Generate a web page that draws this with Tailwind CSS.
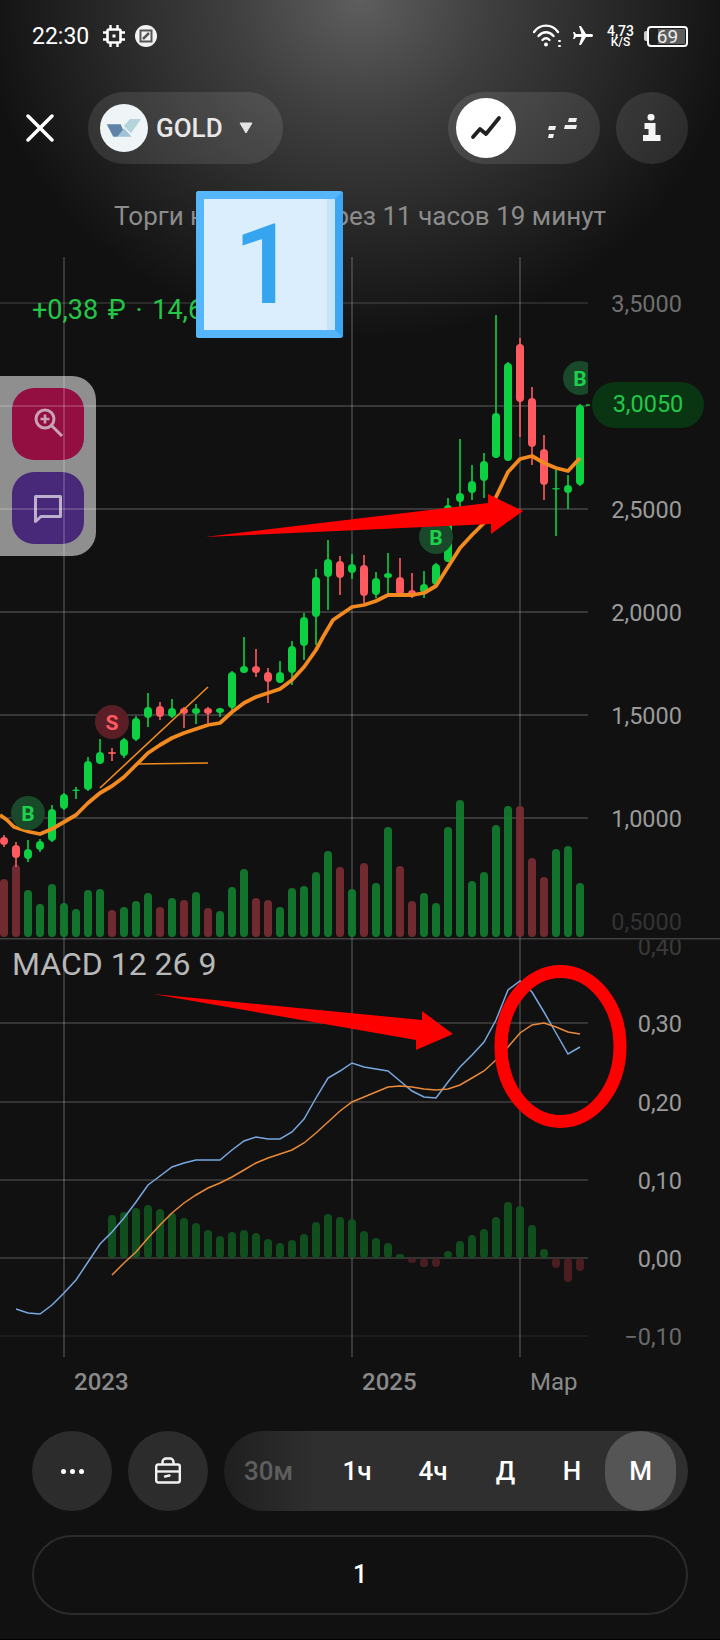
<!DOCTYPE html>
<html lang="ru">
<head>
  <meta charset="UTF-8">
  <meta name="viewport" content="width=device-width, initial-scale=1.0">
  <title>GOLD - график</title>
  <script src="https://cdn.jsdelivr.net/npm/@tailwindcss/browser@4"></script>
</head>
<body class="bg-black">
  <div class="relative w-[720px] h-[1639px] overflow-hidden flex flex-col bg-[#111111] bg-[radial-gradient(ellipse_380px_340px_at_360px_0px,#5e5e5e_0%,#3e3e3e_35%,#111111_100%)] font-['Roboto',sans-serif]">

    <!-- Status bar -->
    <div class="h-[72px] shrink-0 pl-[32px] pr-[32px] flex items-center justify-between text-white">
      <div class="flex items-center">
        <span class="text-[23px] leading-none">22:30</span>
        <svg class="ml-[14px]" width="22" height="22" viewBox="0 0 22 22" fill="none" stroke="#fff">
          <rect x="4.5" y="4.5" width="13" height="13" rx="1.5" stroke-width="2.6"/>
          <rect x="9.5" y="9.5" width="3" height="3" fill="#fff" stroke="none"/>
          <path d="M7.5 0v4M14.500 0v4M7.5 18v4M14.500 18v4M0 7.500h4M0 14.500h4M18 7.500h4M18 14.500h4" stroke-width="2.400"/>
        </svg>
        <svg class="ml-[10px]" width="22" height="22" viewBox="0 0 22 22">
          <circle cx="11" cy="11" r="11" fill="#f2f2f2"/>
          <rect x="5.500" y="5.500" width="11" height="11" fill="none" stroke="#555" stroke-width="2"/>
          <path d="M8 14l6-6" stroke="#555" stroke-width="2.500"/>
        </svg>
      </div>
      <div class="flex items-center">
        <svg width="28" height="24" viewBox="0 0 28 24" fill="none" stroke="#fff" stroke-width="2.400" stroke-linecap="round">
          <path d="M1 8C7-.5 19-.5 25 8"/>
          <path d="M5.500 12c4.500-5 10.500-5 15 0"/>
          <path d="M9.500 16c2.500-2.500 4.500-2.500 7 0"/>
          <circle cx="13" cy="20.500" r="2" fill="#fff" stroke="none"/>
          <path d="M26 17h1M26 22h1" stroke-width="2"/>
        </svg>
        <svg class="ml-[10px]" width="24" height="24" viewBox="0 0 24 24" fill="#fff">
          <path transform="rotate(90 12 12)" d="M21 16v-2l-8-5V3.500c0-.83-.67-1.500-1.500-1.500S10 2.670 10 3.500V9l-8 5v2l8-2.500V19l-2 1.500V22l3.500-1 3.500 1v-1.500L13 19v-5.500l8 2.500z"/>
        </svg>
        <div class="ml-[11px] w-[29px] flex flex-col items-center text-white">
          <span class="text-[14px] leading-[12px] font-medium">4,73</span>
          <span class="text-[12px] leading-[10px] font-medium">K/S</span>
        </div>
        <div class="ml-[9px] w-[3px] h-[10px] bg-[#cccccc] rounded-l-[2px]"></div>
        <div class="relative w-[41px] h-[21px] border-2 border-white rounded-[4px] flex justify-end items-stretch p-[1px]">
          <div class="w-[76%] bg-[#5c5c5c]"></div>
          <span class="absolute inset-0 flex items-center justify-center text-[19px] leading-none text-[#eeeeee]">69</span>
        </div>
      </div>
    </div>

    <!-- Header -->
    <div class="mt-[20px] h-[72px] shrink-0 flex items-center justify-between pl-[26px] pr-[32px]">
      <div class="flex items-center">
        <svg width="28" height="28" viewBox="0 0 28 28" stroke="#fff" stroke-width="3.500" stroke-linecap="round">
          <path d="M2 2l24 24M26 2L2 26"/>
        </svg>
        <div class="ml-[34px] w-[195px] h-[72px] rounded-full bg-white/10 flex items-center pl-[12px]">
          <svg width="48" height="48" viewBox="0 0 48 48">
            <circle cx="24" cy="24" r="24" fill="#eff5f7"/>
            <polygon points="6.700,20.300 20.700,20.300 24,27.700 17.300,32.700 13.300,32.700" fill="#5f82a8"/>
            <polygon points="30,15 41,15 31,29.300 23.700,22" fill="#b5d3db"/>
            <polygon points="17.300,32.700 24,24.300 31.700,32.700" fill="#9fc4d4"/>
          </svg>
          <span class="ml-[8px] text-[26px] leading-none font-medium text-[#e8e8e8]">GOLD</span>
          <svg class="ml-[15px]" width="16" height="12" viewBox="0 0 16 12"><path d="M2 1h12l-6 10z" fill="#e4e4e4" stroke="#e4e4e4" stroke-linejoin="round"/></svg>
        </div>
      </div>
      <div class="flex items-center gap-[16px]">
        <div class="w-[152px] h-[72px] rounded-full bg-white/10 flex items-center pl-[8px]">
          <div class="w-[60px] h-[60px] rounded-full bg-white flex items-center justify-center">
            <svg width="60" height="60" viewBox="0 0 60 60" fill="none" stroke="#222" stroke-width="3.800" stroke-linecap="round" stroke-linejoin="round">
              <path d="M17 39l7-8 6 5 13-16"/>
            </svg>
          </div>
          <svg class="ml-[29px]" width="34" height="24" viewBox="0 0 34 24" fill="#f0f0f0">
            <polygon points="4,10 11,10 10,14 3,14"/>
            <polygon points="4,18 9,18 8,22 3,22"/>
            <polygon points="24,2 32,2 31,6 23,6"/>
            <polygon points="20,9 32,9 31,13 19,13"/>
          </svg>
        </div>
        <div class="w-[72px] h-[72px] rounded-full bg-white/10 flex items-center justify-center">
          <svg width="20" height="30" viewBox="0 0 20 30" fill="#f4f4f4">
            <rect x="5.500" y="1" width="7" height="6.500" rx="3"/>
            <path d="M2.500 10h11v12h5v6H1v-6h5.500v-6h-4z"/>
          </svg>
        </div>
      </div>
    </div>

    <p class="mt-[32px] h-[40px] shrink-0 flex items-center justify-center text-[26px] text-[#8c8c8c]">Торги начнутся через 11 часов 19 минут</p>

    <!-- Chart -->
    <div class="relative h-[1124px] shrink-0">
      <div class="absolute left-0 top-[140px] w-[96px] h-[180px] rounded-r-[24px] bg-[#8f8f8f] flex flex-col gap-[12px] p-[12px]">
        <div class="w-[72px] h-[72px] rounded-[22px] bg-[#930f42] flex items-center justify-center">
          <svg class="-mt-[2px] ml-[2px]" width="32" height="32" viewBox="0 0 32 32" fill="none" stroke="#c9a3b4" stroke-width="3">
            <circle cx="12" cy="12" r="9"/>
            <path d="M12 7.500v9M7.500 12h9" stroke-width="2.600"/>
            <path d="M18.500 18.500L29 29"/>
          </svg>
        </div>
        <div class="w-[72px] h-[72px] rounded-[22px] bg-[#482878] flex items-center justify-center">
          <svg class="mt-[2px]" width="30" height="30" viewBox="0 0 30 30" fill="none" stroke="#bcb0cc" stroke-width="3" stroke-linejoin="round">
            <path d="M2.500 2.500h25v20H8l-5.500 5z"/>
          </svg>
        </div>
      </div>

      <svg id="chart" class="absolute inset-0" width="720" height="1124" viewBox="0 236 720 1124"></svg>

      <div class="absolute left-[32px] top-[56px] text-[27px] leading-[36px] [word-spacing:3px] text-[#25c648] whitespace-nowrap">+0,38 ₽ · 14,68%</div>
      <div class="absolute left-[592px] top-[146px] w-[112px] h-[46px] rounded-full bg-[#0a3513] flex items-center justify-center text-[23.500px] text-[#22c848]">3,0050</div>
    </div>

    <!-- Time axis -->
    <div class="h-[44px] shrink-0 flex items-center pl-[74px] text-[24px] text-[#8a8a8a]">
      <span class="font-medium w-[54px]">2023</span>
      <span class="font-medium w-[54px] ml-[234px]">2025</span>
      <span class="ml-[114px]">Мар</span>
    </div>

    <!-- Toolbar -->
    <div class="mt-[27px] h-[80px] shrink-0 flex gap-[16px] px-[32px]">
      <div class="w-[80px] h-[80px] rounded-full bg-[#2c2c2c] flex items-center justify-center gap-[4px]">
        <span class="w-[5px] h-[5px] rounded-full bg-white"></span>
        <span class="w-[5px] h-[5px] rounded-full bg-white"></span>
        <span class="w-[5px] h-[5px] rounded-full bg-white"></span>
      </div>
      <div class="w-[80px] h-[80px] rounded-full bg-[#2c2c2c] flex items-center justify-center">
        <svg width="28" height="28" viewBox="0 0 28 28" fill="none" stroke="#f2f2f2" stroke-width="2.400" stroke-linejoin="round">
          <path d="M2.200 9.500a2 2 0 0 1 2-2h19.600a2 2 0 0 1 2 2v14a2 2 0 0 1-2 2H4.200a2 2 0 0 1-2-2z"/>
          <path d="M8.500 7.500V5a3.500 3.500 0 0 1 3.500-3.500h4A3.500 3.500 0 0 1 19.500 5v2.500"/>
          <path d="M2.200 14.500h23.600"/>
          <path d="M11 19.500l4.500-1" stroke-linecap="round"/>
        </svg>
      </div>
      <div class="w-[464px] h-[80px] rounded-full bg-[linear-gradient(90deg,#1f1f1f_0%,#2f2f2f_20%)] flex items-center text-[26px] font-medium text-white">
        <span class="w-[89px] text-center text-[#5e5e5e]">30м</span>
        <span class="w-[88px] text-center">1ч</span>
        <span class="w-[64px] text-center">4ч</span>
        <span class="w-[81px] text-center">Д</span>
        <span class="w-[52px] text-center">Н</span>
        <span class="ml-[7px] w-[71px] h-[80px] rounded-full bg-[#555555] flex items-center justify-center">М</span>
      </div>
    </div>

    <div class="mt-[24px] mx-[32px] h-[80px] shrink-0 rounded-full border-2 border-[#2b2b2b] flex items-center justify-center text-[25px] font-medium text-white">1</div>

    <!-- Sticker -->
    <div class="absolute left-[196px] top-[191px] w-[147px] h-[147px] rounded-[3px] border-[8px] border-[#55b6fb] border-r-[#3ba7f3] bg-[#dbeefe] shadow-[inset_-8px_0_0_#c5e3fd] flex items-center justify-center">
      <span class="-ml-[9px] text-[112px] leading-none font-medium text-[#35a5f0]">1</span>
    </div>
  </div>

  <script>
    const GREEN = '#0dd143', RED = '#ff5a60';
    // wick top, wick bottom, body top, body bottom, colour
    const candles = [
      [835,847,837,845,'r'],[842,867,845,858,'r'],[840,862,849,859,'g'],[839,852,841,850,'g'],[805,842,809,841,'g'],
      [793,810,794,809,'g'],[787,799,789.500,791,'g'],[757,791,761,790,'g'],[739,764,752,764,'g'],[748,761,752,754,'r'],
      [738,758,739,756,'g'],[716,741,718,740,'g'],[693,727,707,718,'g'],[702,720,706,717,'r'],[699,718,708,717,'g'],
      [707,728,708,714,'r'],[704,724,708,714,'g'],[707,723,708,714,'r'],[708,717,708,713,'g'],[671,710,672,708,'g'],
      [637,673,666,673,'g'],[649,677,666,673,'r'],[668,703,672,682,'r'],[661,683,672,683,'g'],[641,685,646,673,'g'],
      [613,660,617,646,'g'],[569,645,577,617,'g'],[540,610,559,577,'g'],[556,595,561,578,'r'],[554,579,564,573,'g'],
      [555,603,565,596,'r'],[572,598,578,595,'g'],[553,593,573,578,'g'],[558,596,577,595,'r'],[573,598,590,597,'r'],
      [571,598,584,593,'g'],[563,586,564,585,'g'],[498,562,505,562,'g'],[439,507,493,502,'g'],[465,500,481,493,'g'],
      [453,498,461,481,'g'],[315,458,413,458,'g'],[362,461,363,461,'g'],[338,437,344,402,'r'],[387,465,398,447,'r'],
      [435,500,449,485,'r'],[470,536,488,489.500,'g'],[475,509,485,493,'g'],[404,486,405,485,'g']
    ];
    const volumes = [879,865,890,904,884,903,909,890,889,910,907,901,893,907,898,900,892,908,911,887,869,898,900,907,888,886,872,851,867,889,863,883,827,866,901,893,903,827,800,881,872,825,806,806,858,877,849,846,883];
    const maLine = [[0,815],[7,820],[14,827],[30,832],[40,834],[52,829],[64,822],[76,815],[88,803],[100,793],[112,786],[124,777],[136,765],[148,753],[160,745],[172,738],[184,733],[196,729],[208,725],[220,723],[232,712],[244,703],[256,697],[268,693],[280,689],[292,680],[304,667],[316,650],[323,637],[333,620],[352,607],[364,605],[376,601],[388,595],[400,595],[412,595],[424,593],[436,586],[448,567],[460,548],[472,535],[484,523],[496,497],[508,472],[520,459],[532,456],[544,463],[556,468],[568,471],[580,458]];
    const macdBlue = [1309,1313,1314,1305,1293,1280,1262,1244,1232,1218,1202,1185,1176,1167,1163,1160,1160,1160,1150,1141,1137,1139,1139,1132,1119,1098,1078,1071,1063,1067,1069,1071,1081,1091,1097,1098,1082,1067,1055,1042,1020,990,981,992,1012,1033,1054,1047];
    const macdOrange = [1275,1263,1252,1238,1225,1213,1203,1195,1188,1183,1177,1170,1163,1158,1154,1150,1143,1133,1122,1111,1102,1097,1092,1087,1086,1087,1089,1090,1089,1085,1078,1071,1060,1047,1033,1025,1023,1027,1032,1034];
    const macdBars = [1215,1212,1208,1205,1209,1213,1218,1223,1230,1236,1232,1230,1233,1239,1243,1240,1234,1222,1214,1217,1219,1231,1238,1243,1254,1263,1267,1267,1251,1241,1235,1229,1217,1202,1206,1225,1249,1268,1282,1271];

    const xOf = i => 4 + 12 * i;
    const points = (ys, from) => ys.map((y, n) => xOf(from + n) + ',' + y).join(' ');
    let svg = '<defs><clipPath id="below"><rect x="0" y="940" width="720" height="40"/></clipPath><clipPath id="plot"><rect x="0" y="236" width="588" height="200"/></clipPath></defs>';

    // grid
    const hLines = [[303,.14],[406,.22],[509,.22],[612,.22],[715,.22],[818,.22],[1023,.2],[1102,.2],[1180,.2],[1258,.2],[1336,.07]];
    hLines.forEach(([y, o]) => { svg += `<rect x="0" y="${y - .75}" width="588" height="1.500" fill="#fff" fill-opacity="${o}"/>`; });
    [64, 352, 520].forEach(x => { svg += `<rect x="${x - .75}" y="257" width="1.500" height="1100" fill="#fff" fill-opacity=".22"/>`; });
    svg += '<rect x="0" y="938" width="720" height="1.500" fill="#fff" fill-opacity=".2"/>';

    // axis labels
    const labels = [['3,5000',303,'#6e6e6e'],['2,5000',509,'#9a9a9a'],['2,0000',612,'#9a9a9a'],['1,5000',715,'#9a9a9a'],['1,0000',818,'#9a9a9a'],['0,5000',921,'#333333'],['0,30',1023,'#9a9a9a'],['0,20',1102,'#9a9a9a'],['0,10',1180,'#9a9a9a'],['0,00',1258,'#9a9a9a'],['−0,10',1336,'#6a6a6a']];
    labels.forEach(([t, y, c]) => { svg += `<text x="682" y="${y + 8.500}" text-anchor="end" font-size="23.500" fill="${c}">${t}</text>`; });
    svg += '<text x="682" y="955" text-anchor="end" font-size="23.500" fill="#3a3a3a" clip-path="url(#below)">0,40</text>';
    svg += '<text x="12" y="975" font-size="32" fill="#b8b8b8">MACD 12 26 9</text>';

    // volumes and MACD histogram
    volumes.forEach((top, i) => {
      const c = candles[i][4] === 'g' ? '#137a2e' : '#772c31';
      svg += `<rect x="${xOf(i) - 4}" y="${top}" width="8" height="${937 - top}" rx="4" fill="${c}" fill-opacity=".95"/>`;
    });
    macdBars.forEach((y, n) => {
      const up = y < 1258;
      const top = up ? y : 1258, h = up ? 1258 - y : y - 1258;
      svg += `<rect x="${xOf(n + 9) - 4}" y="${top}" width="8" height="${h}" rx="4" fill="${up ? '#11521f' : '#4e1f22'}" fill-opacity=".95"/>`;
    });

    // candles
    candles.forEach(([wt, wb, bt, bb, col], i) => {
      const c = col === 'g' ? GREEN : RED;
      svg += `<rect x="${xOf(i) - 1}" y="${wt}" width="2" height="${wb - wt}" fill="${c}" fill-opacity=".8"/>`;
      svg += `<rect x="${xOf(i) - 4}" y="${bt}" width="8" height="${bb - bt}" rx="4" fill="${c}"/>`;
    });
    svg += `<path d="M586 405h4" stroke="${GREEN}" stroke-width="1.500"/>`;

    // averages and trend lines
    svg += '<path d="M100 788L208 687M137 764L208 763" fill="none" stroke="#f28a1f" stroke-width="1.600"/>';
    svg += `<polyline points="${maLine.map(p => p.join(',')).join(' ')}" fill="none" stroke="#f28a1f" stroke-width="3.800" stroke-linejoin="round"/>`;
    svg += `<polyline points="${points(macdBlue, 1)}" fill="none" stroke="#78a8e0" stroke-width="1.500"/>`;
    svg += `<polyline points="${points(macdOrange, 9)}" fill="none" stroke="#e88a3a" stroke-width="1.500"/>`;

    // trade markers
    const marker = (x, y, t, bg, fg, clip) => `<g ${clip ? 'clip-path="url(#plot)"' : ''}><circle cx="${x}" cy="${y}" r="17" fill="${bg}"/><text x="${x}" y="${y + 7.500}" text-anchor="middle" font-size="21" font-weight="700" fill="${fg}">${t}</text></g>`;
    svg += marker(28, 813, 'B', '#19492a', '#1ed14b');
    svg += marker(112, 722, 'S', '#5a1f26', '#ff5a60');
    svg += marker(436, 537, 'B', '#19492a', '#1ed14b');
    svg += marker(580, 378, 'B', '#19492a', '#1ed14b', true);

    // hand drawn annotations
    svg += '<polygon points="205,537 488,503 488,494 523,511 491,534 491,524" fill="#ff0000"/>';
    svg += '<polygon points="153,994 422,1020 422,1011 453,1034 416,1050 416,1040" fill="#ff0000"/>';
    svg += '<ellipse cx="560.500" cy="1046.500" rx="59.500" ry="75" fill="none" stroke="#ff0000" stroke-width="13"/>';

    document.getElementById('chart').innerHTML = svg;
  </script>
</body>
</html>
